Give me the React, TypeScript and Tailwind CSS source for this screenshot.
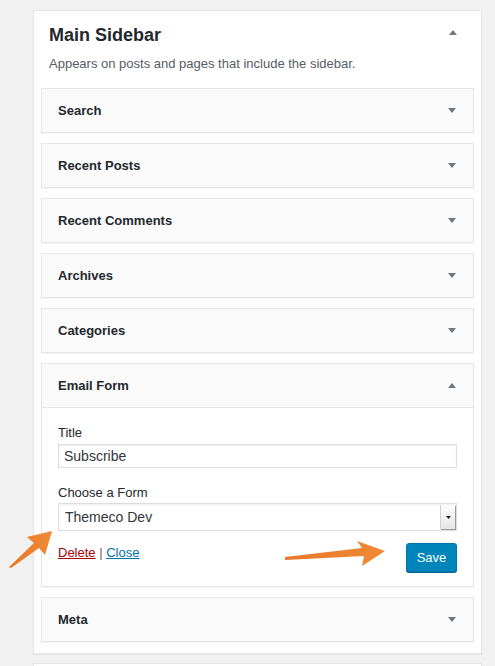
import React from "react";

const WIDGETS = ["Search", "Recent Posts", "Recent Comments", "Archives", "Categories"];

function Caret({ up = false }: { up?: boolean }) {
  return (
    <svg width="8" height="5" viewBox="0 0 8 5" className="shrink-0">
      {up ? <polygon points="0,5 8,5 4,0" fill="#72777c" /> : <polygon points="0,0 8,0 4,5" fill="#72777c" />}
    </svg>
  );
}

function WidgetRow({ title }: { title: string }) {
  return (
    <div className="mx-[7px] mb-[10px] h-[45px] flex items-center justify-between pl-[16px] pr-[17px] bg-[#fafafa] border border-[#e5e5e5] shadow-[0_1px_1px_rgba(0,0,0,0.04)]">
      <span className="text-[13px] font-bold text-[#23282d]">{title}</span>
      <Caret />
    </div>
  );
}

export default function App() {
  return (
    <div
      className="relative min-h-screen bg-[#f1f1f1] pt-[10px] pl-[33px]"
      style={{ fontFamily: '"Liberation Sans", Arial, sans-serif' }}
    >
      {/* Sidebar area */}
      <div className="w-[449px] bg-white border border-[#e5e5e5] shadow-[0_1px_1px_rgba(0,0,0,0.04)] pb-[1px]">
        <div className="flex items-start justify-between pl-[15px] pr-[24px] pt-[12px]">
          <h3 className="text-[18px] leading-[24px] font-semibold text-[#23282d]">Main Sidebar</h3>
          <div className="pt-[7px]">
            <Caret up />
          </div>
        </div>
        <p className="pl-[15px] mt-[7px] mb-[14px] text-[13px] leading-[20px] text-[#555d66]">
          Appears on posts and pages that include the sidebar.
        </p>

        {WIDGETS.map((w) => (
          <WidgetRow key={w} title={w} />
        ))}

        {/* Open widget */}
        <div className="mx-[7px] mb-[10px] border border-[#e5e5e5] shadow-[0_1px_1px_rgba(0,0,0,0.04)]">
          <div className="h-[44px] flex items-center justify-between pl-[16px] pr-[17px] bg-[#fafafa] border-b border-[#e5e5e5]">
            <span className="text-[13px] font-bold text-[#23282d]">Email Form</span>
            <Caret up />
          </div>
          <div className="bg-white px-[16px] pt-[15px] pb-[14px]">
            <label className="block text-[13px] leading-[20px] text-[#23282d]">Title</label>
            <input
              readOnly
              value="Subscribe"
              className="mt-[1px] block w-full h-[24px] px-[5px] border border-[#ddd] shadow-[inset_0_1px_2px_rgba(0,0,0,0.07)] text-[14px] text-[#32373c] outline-none"
            />
            <label className="block mt-[15px] text-[13px] leading-[20px] text-[#23282d]">Choose a Form</label>
            <div className="flex h-[28px] border border-[#ddd] shadow-[inset_0_1px_2px_rgba(0,0,0,0.07)]">
              <span className="flex-1 flex items-center pl-[6px] text-[14px] text-[#32373c]">Themeco Dev</span>
              <div className="w-[15px] my-[1px] mr-[1px] flex items-center justify-center bg-gradient-to-b from-[#fdfdfd] to-[#e6e6e6] border-l border-[#cfcfcf] shadow-[1px_1px_0_#9a9a9a]">
                <svg width="5" height="3" viewBox="0 0 5 3">
                  <polygon points="0,0 5,0 2.5,3" fill="#222" />
                </svg>
              </div>
            </div>
            <div className="mt-[12px] flex items-start justify-between">
              <div className="pt-[1px] text-[13px] leading-[18px]">
                <a className="text-[#a00] underline">Delete</a>
                <span className="text-[#666]"> | </span>
                <a className="text-[#0073aa] underline">Close</a>
              </div>
              <button className="h-[29px] w-[51px] rounded-[3px] bg-[#0085ba] border border-[#0073aa] shadow-[0_1px_0_#006799] text-[13px] text-white">
                Save
              </button>
            </div>
          </div>
        </div>

        <WidgetRow title="Meta" />
      </div>

      {/* next sidebar card, cut by the window */}
      <div className="mt-[9px] w-[449px] h-[60px] bg-white border border-[#e5e5e5]" />

      {/* annotation arrows */}
      <svg className="absolute left-0 top-0 pointer-events-none" width="495" height="666" viewBox="0 0 495 666">
        <defs>
          <linearGradient id="org" x1="0" y1="0" x2="1" y2="0">
            <stop offset="0" stopColor="#e9772a" />
            <stop offset="1" stopColor="#f08a35" />
          </linearGradient>
        </defs>
        <polygon
          points="9,567 34,543 27,537 52,531 45,555 39,548 11,568"
          fill="url(#org)"
        />
        <polygon
          points="285,557 362,548 357,541 385,551 362,566 364,556 285,560"
          fill="url(#org)"
        />
      </svg>
    </div>
  );
}
